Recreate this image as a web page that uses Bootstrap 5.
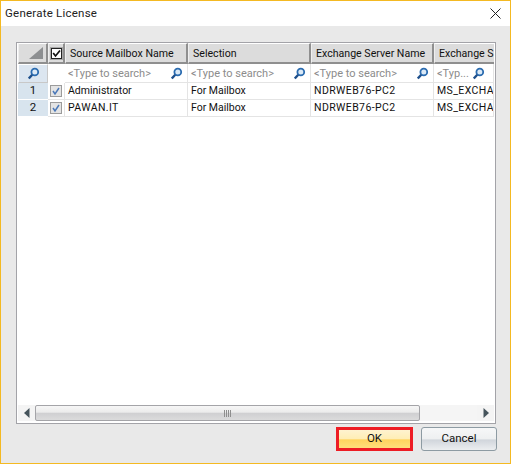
<!DOCTYPE html>
<html lang="en"><head><meta charset="utf-8"><title>Generate License</title>
<link rel="stylesheet" href="https://cdn.jsdelivr.net/npm/bootstrap@5.3.0/dist/css/bootstrap.min.css">
<style>
html,body{margin:0;height:464px;width:511px;overflow:hidden;background:#e9e9e9}
.win{width:511px;height:464px;border:1px solid #f4b922;background:#e9e9e9;font-family:Roboto,"Liberation Sans",sans-serif;font-size:10.5px;color:#111;line-height:1}
.ttl{height:25px;background:#fff;padding:0 5px 0 4px;font-size:11.5px;letter-spacing:.02em;color:#222}
.bodyw{height:436px;padding:16px 13px 0 15px}
.gridw{width:480px;height:382px;border:1px solid #a3a3a8;background:#fff;padding:0 1px}
.rw{width:476px;overflow:hidden}
.hd{height:21px}
.sr{height:19px}
.dr{height:17px}
.capsx{letter-spacing:.4px}
.c0{width:30px}.c1{width:17px}.c2{width:123px}.c3{width:123px}.c4{width:123px}.c5{width:60px}
.cellx{flex:none;display:flex;align-items:center;padding-left:3px;white-space:nowrap;overflow:hidden}
.hd .cellx{background:#dcdcdc;border:1px solid #fff;border-right:2px solid #8f8f8f;border-bottom:2px solid #8f8f8f;border-left-color:#efefef;padding-left:4px;padding-top:3px;font-size:10.6px}
.hd .c5{border-right:0}
.sr .cellx{border-right:1px solid #e4e4e4;border-bottom:1px solid #e4e4e4;color:#8c8c8c;justify-content:space-between;padding-right:4px;font-size:11px}
.dr .cellx{border-right:1px solid #e4e4e4;border-bottom:1px solid #e4e4e4;padding-left:3px}
.hd .c0{justify-content:flex-end;padding:0 2px 0 0}
.sr .c0{background:#dce6f0;justify-content:center;padding:0;border:1px solid #fff;border-right-color:#c8c8c8;border-bottom-color:#c8c8c8}
.dr .c0{background:#d8e4ee;justify-content:center;padding:0;border:0;border-bottom:1px solid #fff;font-size:11.5px}
.rw .c1{justify-content:center;padding:0}
.box{width:12px;height:12px;border:1px solid #9b9b9b;background:#e4e4e4;display:block}
.hbox{background:#fff;border:1px solid #222;outline:1px solid #a8a8a8;width:11px;height:11px;display:block}
.spacer{height:288px}
.sb{height:16px;background:#f4f4f4}
.arr{width:17px;display:flex;align-items:center;justify-content:center;flex:none}
.thumb{width:385px;flex:none;height:16px;border:1px solid #a4a4a8;border-radius:2px;background:linear-gradient(#f6f6f6 0,#ececec 45%,#cfcfd1 50%,#dbdbdc 100%)}
.grip{width:8px;height:7px;background:repeating-linear-gradient(90deg,#8e8e8e 0 1px,transparent 1px 2px)}
.track{flex:1;background:#f5f5f5}
.foot{padding-top:3px;gap:8px}
.bok{width:77px;height:24px;border:3px solid #ed1c24;border-radius:0;padding:0;background:linear-gradient(#fff3cf 0,#ffeeb6 48%,#ffd45e 55%,#ffdf7c 100%);font-size:11.5px;color:#111;line-height:1}
.bcn{width:76px;height:24px;border:1px solid #8d9ba3;border-radius:3px;padding:0;background:linear-gradient(#f6f7f8 0,#eef0f1 48%,#d1d6dc 55%,#eceef0 100%);font-size:11.5px;color:#111;line-height:1}
</style></head><body>
<div class="win">
<div class="ttl d-flex align-items-center justify-content-between"><span>Generate License</span>
<svg width="11" height="11" viewBox="0 0 11 11" class="me-1"><path d="M.5.5l10 10M10.5.5l-10 10" stroke="#222" stroke-width="1" fill="none"/></svg></div>
<div class="bodyw">
<div class="gridw">
<div class="rw hd d-flex">
<div class="cellx c0"><svg width="17" height="14" viewBox="0 0 17 14"><path d="M16 1v12H2z" fill="#8d8f91"/></svg></div>
<div class="cellx c1"><span class="hbox"><svg width="9" height="9" viewBox="0 0 9 9" class="d-block"><path d="M1.2 4l2.3 3L8 1.5" stroke="#111" stroke-width="1.7" fill="none"/></svg></span></div>
<div class="cellx c2">Source Mailbox Name</div><div class="cellx c3">Selection</div><div class="cellx c4">Exchange Server Name</div><div class="cellx c5">Exchange S</div>
</div>
<div class="rw sr d-flex">
<div class="cellx c0"><svg width="13" height="13" viewBox="0 0 13 13"><circle cx="7.8" cy="5" r="3.4" fill="#dbe9f6" stroke="#2b6cb0" stroke-width="1.8"/><path d="M5.2 7.8L1.8 11.5" stroke="#1d4f8c" stroke-width="2.4"/></svg></div>
<div class="cellx c1 border-0"></div>
<div class="cellx c2"><span>&lt;Type to search&gt;</span><svg width="13" height="13" viewBox="0 0 13 13"><circle cx="7.8" cy="5" r="3.4" fill="#dbe9f6" stroke="#2b6cb0" stroke-width="1.8"/><path d="M5.2 7.8L1.8 11.5" stroke="#1d4f8c" stroke-width="2.4"/></svg></div>
<div class="cellx c3"><span>&lt;Type to search&gt;</span><svg width="13" height="13" viewBox="0 0 13 13"><circle cx="7.8" cy="5" r="3.4" fill="#dbe9f6" stroke="#2b6cb0" stroke-width="1.8"/><path d="M5.2 7.8L1.8 11.5" stroke="#1d4f8c" stroke-width="2.4"/></svg></div>
<div class="cellx c4"><span>&lt;Type to search&gt;</span><svg width="13" height="13" viewBox="0 0 13 13"><circle cx="7.8" cy="5" r="3.4" fill="#dbe9f6" stroke="#2b6cb0" stroke-width="1.8"/><path d="M5.2 7.8L1.8 11.5" stroke="#1d4f8c" stroke-width="2.4"/></svg></div>
<div class="cellx c5"><span>&lt;Typ...</span><svg width="13" height="13" viewBox="0 0 13 13" class="me-1"><circle cx="7.8" cy="5" r="3.4" fill="#dbe9f6" stroke="#2b6cb0" stroke-width="1.8"/><path d="M5.2 7.8L1.8 11.5" stroke="#1d4f8c" stroke-width="2.4"/></svg></div>
</div>
<div class="rw dr d-flex">
<div class="cellx c0">1</div>
<div class="cellx c1"><span class="box"><svg width="10" height="10" viewBox="0 0 10 10" class="d-block"><path d="M2 5l2 3 4-6" stroke="#4a78b8" stroke-width="1.5" fill="none"/></svg></span></div>
<div class="cellx c2">Administrator</div><div class="cellx c3">For Mailbox</div><div class="cellx c4 capsx">NDRWEB76-PC2</div><div class="cellx c5 capsx">MS_EXCHA</div>
</div>
<div class="rw dr d-flex">
<div class="cellx c0">2</div>
<div class="cellx c1"><span class="box"><svg width="10" height="10" viewBox="0 0 10 10" class="d-block"><path d="M2 5l2 3 4-6" stroke="#4a78b8" stroke-width="1.5" fill="none"/></svg></span></div>
<div class="cellx c2 capsx">PAWAN.IT</div><div class="cellx c3">For Mailbox</div><div class="cellx c4 capsx">NDRWEB76-PC2</div><div class="cellx c5 capsx">MS_EXCHA</div>
</div>
<div class="spacer"></div>
<div class="rw sb d-flex">
<div class="arr"><svg width="6" height="10" viewBox="0 0 6 10"><path d="M5.5 0v10L0 5z" fill="#46545c"/></svg></div>
<div class="thumb d-flex align-items-center justify-content-center"><span class="grip"></span></div>
<div class="track"></div>
<div class="arr"><svg width="6" height="10" viewBox="0 0 6 10"><path d="M.5 0v10L6 5z" fill="#46545c"/></svg></div>
</div>
</div>
<div class="foot d-flex justify-content-end">
<button type="button" class="btn bok">OK</button>
<button type="button" class="btn bcn">Cancel</button>
</div>
</div>
</div>
</body></html>
